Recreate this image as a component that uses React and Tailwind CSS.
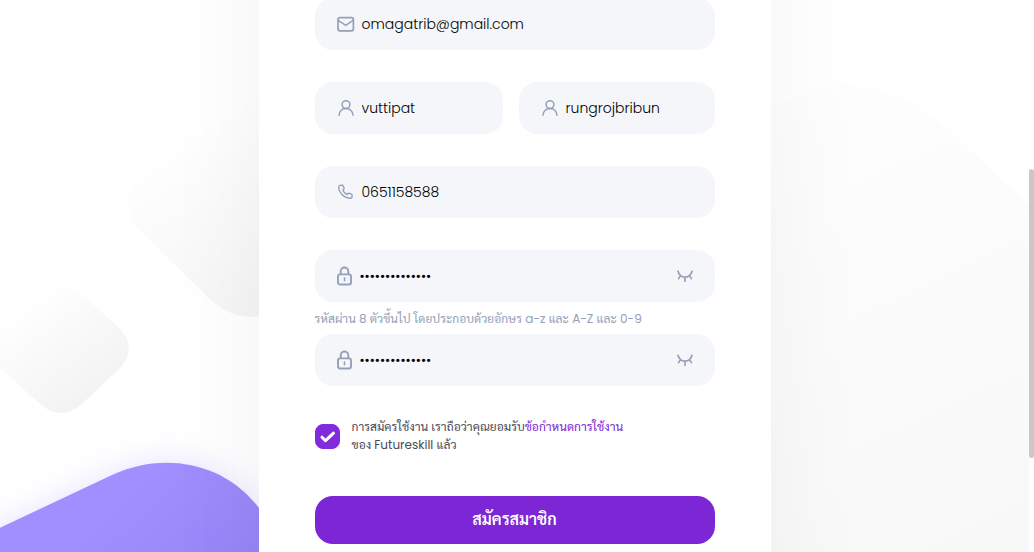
import { useState } from "react";

const iconClass = "size-[18px] shrink-0 fill-none stroke-[#94a0b8]";

function MailIcon() {
  return (
    <svg viewBox="0 0 18 18" className={iconClass} strokeWidth="1.7" strokeLinejoin="round" strokeLinecap="round" aria-hidden="true">
      <rect x="1" y="2.6" width="15.4" height="13.2" rx="2" />
      <path d="M1.6 5.6 8.7 10.4l7.1-4.8" strokeWidth="1.5" />
    </svg>
  );
}

function UserIcon() {
  return (
    <svg viewBox="0 0 18 18" className={iconClass} strokeWidth="1.5" strokeLinecap="round" aria-hidden="true">
      <circle cx="9" cy="5.6" r="3.9" />
      <path d="M2 16.2c.3-4 3.200-6.700 7-6.700s6.700 2.700 7 6.700" />
    </svg>
  );
}

function PhoneIcon() {
  return (
    <svg viewBox="0 0 18 18" className={iconClass} strokeWidth="1.4" strokeLinejoin="round" aria-hidden="true">
      <path d="M3 2.400 5 2.200c.6 0 1 .3 1.200.8l.8 2c.2.500.1 1-.3 1.400l-.9.900c.9 1.900 2.300 3.300 4.200 4.200l.9-.9c.4-.4.9-.5 1.400-.3l2 .8c.5.200.8.600.8 1.200l-.1 1.700c-.1.800-.7 1.300-1.500 1.300C7.400 15.300 1.700 9.700 1.700 3.900c0-.8.500-1.400 1.300-1.500Z" />
    </svg>
  );
}

function LockIcon() {
  return (
    <svg viewBox="0 0 16 18" className="h-[18px] w-4 shrink-0 overflow-visible fill-none stroke-[#94a0b8]" strokeWidth="1.9" strokeLinecap="round" aria-hidden="true">
      <rect x="1" y="7.400" width="13" height="10.100" rx="2" />
      <path d="M3.700 7V4.300a3.800 3.800 0 0 1 7.600 0V7" />
      <path d="M7.500 11v2.700" strokeWidth="1.600" />
    </svg>
  );
}

function ClosedEyeIcon() {
  return (
    <svg viewBox="0 0 18 18" className={iconClass} strokeWidth="1.700" strokeLinecap="round" aria-hidden="true">
      <path d="M2 4.200c1.100 3.900 3.700 5.900 7 5.900s5.900-2 7-5.900M4.500 8.600 2.600 11.600M13.500 8.600l1.900 3M9 10.200v4" />
    </svg>
  );
}

function Field({ id, label, icon, type = "text", value }) {
  const [text, setText] = useState(value);
  const [shown, setShown] = useState(false);
  const secret = type === "password";
  return (
    <div className="flex h-[52px] min-w-0 items-center gap-[7px] rounded-[18px] bg-[#f4f6fa] pr-[21px] pl-[22px]">
      <label htmlFor={id} aria-label={label}>{icon}</label>
      <input
        id={id}
        aria-label={label}
        type={secret && shown ? "text" : type}
        value={text}
        onChange={(e) => setText(e.target.value)}
        className="h-8 w-0 min-w-0 flex-1 bg-transparent text-[14px] font-light text-black outline-none"
      />
      {secret && (
        <button type="button" aria-label="แสดงรหัสผ่าน" onClick={() => setShown(!shown)}>
          <ClosedEyeIcon />
        </button>
      )}
    </div>
  );
}

function Backdrop() {
  return (
    <svg viewBox="0 0 1029 552" preserveAspectRatio="xMidYMid slice" className="absolute inset-0 size-full" aria-hidden="true">
      <defs>
        <linearGradient id="tile" x1="0.2" y1="0.2" x2="0.8" y2="0.9">
          <stop offset="0" stopColor="#ffffff" />
          <stop offset="1" stopColor="#f2f2f2" />
        </linearGradient>
        <linearGradient id="large" x1="165" y1="140" x2="270" y2="310" gradientUnits="userSpaceOnUse">
          <stop offset="0" stopColor="#ffffff" />
          <stop offset="1" stopColor="#f4f4f4" />
        </linearGradient>
        <linearGradient id="right" x1="780" y1="80" x2="1000" y2="552" gradientUnits="userSpaceOnUse">
          <stop offset="0" stopColor="#fefefe" />
          <stop offset="1" stopColor="#f8f8f8" />
        </linearGradient>
        <linearGradient id="violet" x1="140" y1="480" x2="300" y2="650" gradientUnits="userSpaceOnUse">
          <stop offset="0" stopColor="#a18fff" />
          <stop offset="1" stopColor="#8f7cf0" />
        </linearGradient>
        <filter id="glow" x="-30%" y="-60%" width="160%" height="220%">
          <feGaussianBlur stdDeviation="16" />
        </filter>
      </defs>
      <path d="M138 229 213 302Q248 330 283 306L400 200 300 70 142 172Q116 200 138 229Z" fill="url(#large)" />
      <path d="M42 294Q62 278 82 294L121 330Q137 349 121 367L82 404Q60 422 40 404L-12 357Q-20 349-12 341Z" fill="url(#tile)" />
      <path d="M700 180Q770 85 848 85 911 88 965 145L1029 205V552H700Z" fill="url(#right)" />
      <path d="M-60 556 112 475C160 452 220 456 259 508L320 620H-60Z" fill="#8873ff" opacity=".2" filter="url(#glow)" />
      <path d="M-60 556 112 475C160 452 223 460 259 508L320 620H-60Z" fill="url(#violet)" />
    </svg>
  );
}

export default function App() {
  return (
    <div className="flex h-screen overflow-hidden bg-white font-['Poppins','Sarabun','Noto_Sans_Thai_Looped','Leelawadee_UI','Noto_Sans',sans-serif]">
      <div className="relative flex min-w-0 flex-1 justify-center overflow-hidden">
        <Backdrop />
        <main className="relative -my-40 w-full max-w-[512px] bg-white px-14 py-40 shadow-[0_0_100px_rgba(0,0,0,0.05)]">
          <form className="-mt-0.5 flex flex-col" onSubmit={(e) => e.preventDefault()}>
            <div className="flex flex-col gap-8">
              <Field id="email" label="อีเมล" type="email" icon={<MailIcon />} value="omagatrib@gmail.com" />
              <div className="grid grid-cols-[47fr_49fr] gap-4">
                <Field id="first" label="ชื่อ" icon={<UserIcon />} value="vuttipat" />
                <Field id="last" label="นามสกุล" icon={<UserIcon />} value="rungrojbribun" />
              </div>
              <Field id="phone" label="เบอร์โทรศัพท์" type="tel" icon={<PhoneIcon />} value="0651158588" />
              <Field id="password" label="รหัสผ่าน" type="password" icon={<LockIcon />} value="Password123456" />
            </div>
            <p className="flex h-8 items-center pt-0.5 text-[12px] leading-4 whitespace-nowrap text-[#94a0b8]">
              รหัสผ่าน 8 ตัวขึ้นไป โดยประกอบด้วยอักษร a-z และ A-Z และ 0-9
            </p>
            <Field id="confirm" label="ยืนยันรหัสผ่าน" type="password" icon={<LockIcon />} value="Password123456" />
            <div className="mt-8 flex items-center gap-3">
              <span className="relative size-[25px] shrink-0">
                <input id="terms" type="checkbox" defaultChecked className="peer size-[25px] appearance-none rounded-lg border border-[#822bdb] bg-white checked:bg-[#822bdb]" />
                <svg viewBox="0 0 25 25" className="pointer-events-none absolute inset-0 hidden fill-none stroke-white peer-checked:block" strokeWidth="3" strokeLinecap="round" strokeLinejoin="round" aria-hidden="true">
                  <path d="m7 13.200 3.500 3.500 8-7.600" />
                </svg>
              </span>
              <label htmlFor="terms" className="text-[12px] leading-[18px] whitespace-nowrap text-[#4b4b57]">
                การสมัครใช้งาน เราถือว่าคุณยอมรับ<a href="#terms" className="text-[#7c26d6]">ข้อกำหนดการใช้งาน</a>
                <br />
                ของ Futureskill แล้ว
              </label>
            </div>
            <button type="submit" className="mt-[42px] h-12 rounded-[18px] bg-[#7c26d6] text-[16px] font-semibold text-white">
              สมัครสมาชิก
            </button>
          </form>
        </main>
      </div>
      <div className="w-[5px] shrink-0 bg-white pt-[169px]" aria-hidden="true">
        <div className="h-[289px] rounded-full bg-[#c8c8c8]" />
      </div>
    </div>
  );
}
